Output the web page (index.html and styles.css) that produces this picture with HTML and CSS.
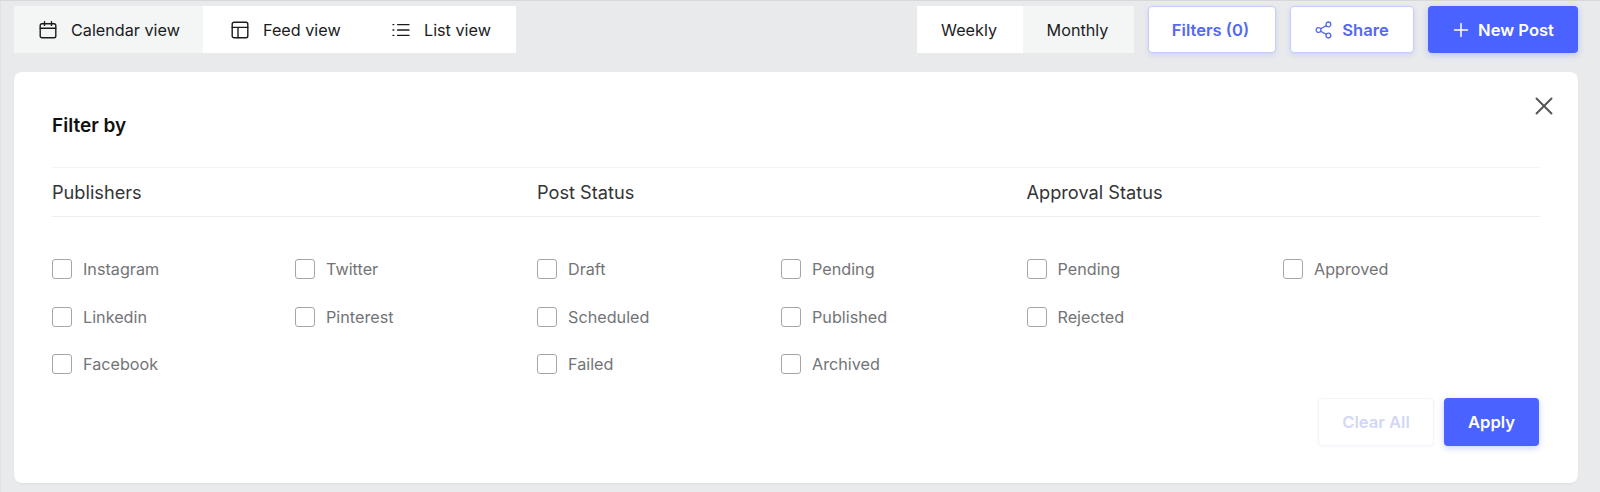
FILE: index.html
```html
<!DOCTYPE html>
<html lang="en">
<head>
<meta charset="utf-8">
<title>Filter by</title>
<link rel="stylesheet" href="styles.css">
</head>
<body>
<header class="toolbar">
  <nav class="views">
    <a class="view view-calendar is-active">
      <svg class="icon" viewBox="0 0 18 18" fill="none" stroke="currentColor" stroke-width="1.4" stroke-linecap="round" stroke-linejoin="round"><rect x="1.2" y="2.8" width="15.6" height="14" rx="1.8"/><path d="M1.2 7.2h15.6M5.5 .8v3.6M12.5 .8v3.6"/></svg>
      <span>Calendar view</span>
    </a>
    <a class="view view-feed">
      <svg class="icon" viewBox="0 0 18 18" fill="none" stroke="currentColor" stroke-width="1.4" stroke-linecap="round" stroke-linejoin="round"><rect x="1.2" y="1.2" width="15.6" height="15.6" rx="1.8"/><path d="M1.2 6.4h15.6M7 6.4v10.4"/></svg>
      <span>Feed view</span>
    </a>
    <a class="view view-list">
      <svg class="icon" viewBox="0 0 18 18" fill="none" stroke="currentColor" stroke-width="1.4" stroke-linecap="round"><path d="M5.6 3.6h11.4M5.6 9h11.4M5.6 14.4h11.4"/><path d="M1 3.6h.8M1 9h.8M1 14.4h.8"/></svg>
      <span>List view</span>
    </a>
  </nav>
  <div class="actions">
    <div class="period">
      <a class="period-item period-weekly">Weekly</a>
      <a class="period-item period-monthly">Monthly</a>
    </div>
    <button class="btn btn-outline btn-filters">Filters (0)</button>
    <button class="btn btn-outline btn-share">
      <svg class="icon-sm" viewBox="0 0 18 18" fill="none" stroke="currentColor" stroke-width="1.3"><circle cx="13.4" cy="3.4" r="2.4"/><circle cx="3.6" cy="9" r="2.4"/><circle cx="13.4" cy="14.6" r="2.4"/><path d="M5.7 7.8l5.6-3.2M5.7 10.2l5.6 3.2"/></svg>
      Share
    </button>
    <button class="btn btn-primary btn-new">
      <svg class="icon-sm" viewBox="0 0 18 18" fill="none" stroke="currentColor" stroke-width="1.5" stroke-linecap="round"><path d="M9 2.5v13M2.5 9h13"/></svg>
      New Post
    </button>
  </div>
</header>

<main class="panel">
  <button class="close" aria-label="Close">
    <svg viewBox="0 0 18 18" fill="none" stroke="currentColor" stroke-width="1.9" stroke-linecap="round"><path d="M1.5 1.5l15 15M16.5 1.5l-15 15"/></svg>
  </button>
  <h2 class="title">Filter by</h2>
  <div class="headings">
    <h3 class="heading">Publishers</h3>
    <h3 class="heading">Post Status</h3>
    <h3 class="heading">Approval Status</h3>
  </div>
  <div class="groups">
    <div class="options options-pub">
      <label class="option"><i class="box"></i>Instagram</label>
      <label class="option"><i class="box"></i>Linkedin</label>
      <label class="option"><i class="box"></i>Facebook</label>
      <label class="option"><i class="box"></i>Twitter</label>
      <label class="option"><i class="box"></i>Pinterest</label>
    </div>
    <div class="options options-post">
      <label class="option"><i class="box"></i>Draft</label>
      <label class="option"><i class="box"></i>Scheduled</label>
      <label class="option"><i class="box"></i>Failed</label>
      <label class="option"><i class="box"></i>Pending</label>
      <label class="option"><i class="box"></i>Published</label>
      <label class="option"><i class="box"></i>Archived</label>
    </div>
    <div class="options options-appr">
      <label class="option"><i class="box"></i>Pending</label>
      <label class="option"><i class="box"></i>Rejected</label>
      <span class="option-gap"></span>
      <label class="option"><i class="box"></i>Approved</label>
    </div>
  </div>
  <footer class="footer">
    <button class="btn btn-clear">Clear All</button>
    <button class="btn btn-primary btn-apply">Apply</button>
  </footer>
</main>
</body>
</html>
```

FILE: styles.css
```css
* { box-sizing: border-box; }
html, body { margin: 0; height: 100%; }
body {
  width: 1600px;
  height: 492px;
  overflow: hidden;
  background: #e8eaec;
  border-top: 1px solid #d6d8d9;
  border-left: 1px solid #dfe1e2;
  padding: 5px 22px 0 13px;
  font-family: Inter, "Liberation Sans", sans-serif;
  font-size: 16px;
  color: #1b1c1e;
}
.toolbar {
  display: flex;
  justify-content: space-between;
  height: 47px;
}
.views, .period { display: flex; background: #fff; }
.view {
  display: flex;
  align-items: center;
  gap: 14px;
  padding-left: 25px;
  font-size: 16.2px;
}
.view-calendar { width: 189px; background: #f4f5f5; }
.view-feed { width: 158px; padding-left: 28px; gap: 14px; }
.view-list { width: 155px; padding-left: 31px; gap: 14px; }
.icon { width: 18px; height: 18px; flex: none; }
.actions { display: flex; gap: 14px; }
.period { margin-left: -1px; }
.period-item { display: flex; align-items: center; justify-content: center; font-size: 16.2px; }
.period-weekly { width: 106px; padding-right: 2px; }
.period-monthly { width: 111px; padding-right: 2px; background: #f4f5f5; }
.btn {
  display: flex;
  align-items: center;
  justify-content: center;
  border-radius: 4px;
  font-family: inherit;
  font-size: 16.6px;
  font-weight: 600;
  padding: 0;
  cursor: pointer;
}
.btn-outline {
  background: #fff;
  color: #5469f0;
  border: 1px solid #c6ccfa;
  box-shadow: 0 2px 5px rgba(74, 98, 255, .16);
}
.btn-filters { width: 128px; padding-right: 3px; }
.btn-share { width: 124px; gap: 9px; }
.btn-primary {
  background: #4a62ff;
  color: #fff;
  border: 0;
  box-shadow: 0 2px 6px rgba(74, 98, 255, .3);
}
.btn-new { width: 150px; gap: 8px; }
.icon-sm { width: 18px; height: 18px; flex: none; }
.panel {
  position: relative;
  margin-top: 19px;
  height: 411px;
  background: #fff;
  border-radius: 8px;
  padding: 44px 38px 0 38px;
  box-shadow: 0 1px 2px rgba(0, 0, 0, .05);
}
.close {
  position: absolute;
  top: 25px;
  right: 25px;
  width: 18px;
  height: 18px;
  padding: 0;
  border: 0;
  background: none;
  color: #525355;
}
.close svg { display: block; width: 18px; height: 18px; }
.title {
  margin: 0;
  height: 20px;
  line-height: 20px;
  font-size: 19px;
  font-weight: 600;
  color: #111;
  margin-bottom: 31px;
}
.headings {
  display: grid;
  grid-template-columns: 485px 489.5px 1fr;
  height: 50px;
  align-items: center;
  border-top: 1px solid #f3f4f4;
  border-bottom: 1px solid #eeeff0;
}
.heading { margin: 0; font-size: 18.2px; font-weight: 400; color: #333436; }
.groups {
  display: grid;
  grid-template-columns: 485px 489.5px 1fr;
  margin-top: 36px;
}
.options {
  display: grid;
  grid-auto-flow: column;
  grid-template-rows: repeat(3, 47.5px);
}
.options-pub { grid-template-columns: 243px 1fr; }
.options-post { grid-template-columns: 244px 1fr; }
.options-appr { grid-template-columns: 256.5px 1fr; }
.option {
  display: flex;
  align-items: center;
  gap: 11px;
  height: 32px;
  color: #737476;
  font-size: 16.2px;
  line-height: 32px;
}
.box {
  width: 20px;
  height: 20px;
  flex: none;
  border: 1.5px solid #a5a6a8;
  border-radius: 3px;
  background: #fff;
}
.footer {
  display: flex;
  justify-content: flex-end;
  gap: 10px;
  margin-top: 2px;
  padding-right: 1px;
}
.footer .btn { height: 48px; }
.btn-clear {
  width: 116px;
  background: #fff;
  color: #d3d7f6;
  border: 1px solid #f3f4f8;
  box-shadow: 0 1px 3px rgba(74, 98, 255, .05);
}
.btn-apply { width: 95px; }
```
